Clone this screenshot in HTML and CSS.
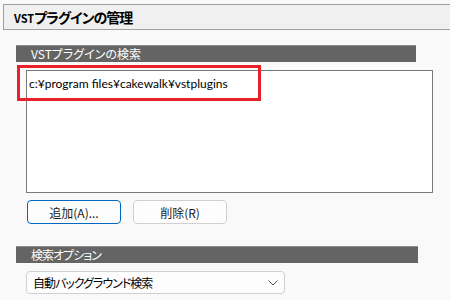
FILE: index.html
```html
<!DOCTYPE html>
<html lang="ja">
<head>
    <meta charset="UTF-8">
    <title>VSTプラグインの管理</title>
    <link rel="stylesheet" href="styles.css">
</head>
<body>
<div class="titlebar"><span class="small">VST</span>プラグインの管理</div>

<div class="panel">
    <div class="section-head">VSTプラグインの検索</div>
    <div class="listbox">
        <div class="path">c:¥program files¥cakewalk¥vstplugins</div>
        <div class="highlight"></div>
    </div>
    <div class="buttons">
        <button class="btn default">追加(A)...</button>
        <button class="btn">削除(R)</button>
    </div>

    <div class="section-head second">検索オプション</div>
    <div class="select">
        <span>自動バックグラウンド検索</span>
        <svg class="chevron" width="10" height="6" viewBox="0 0 10 6">
            <path d="M0.5 0.5 L5 5 L9.5 0.5" fill="none" stroke="#555" stroke-width="1"/>
        </svg>
    </div>
</div>
</body>
</html>
```

FILE: styles.css
```css
body {
    margin: 0;
    background: #f9f9f9;
    font-family: "Noto Sans", "Noto Sans CJK JP", sans-serif;
    font-size: 12px;
    color: #1a1a1a;
    overflow: hidden;
}
.titlebar {
    margin: 4px 0 0 3px;
    height: 24px;
    line-height: 24px;
    padding-left: 10px;
    background: #f0f0f0;
    border-top: 1px solid #a0a0a0;
    border-bottom: 1px solid #a0a0a0;
    border-left: 1px solid #a0a0a0;
    font-family: "Noto Sans CJK JP", sans-serif;
    font-feature-settings: "palt";
    font-weight: bold;
    font-size: 14px;
    letter-spacing: -1px;
    color: #000;
}
.titlebar .small {
    font-size: 11px;
    letter-spacing: 0;
}
.panel {
    padding-left: 16px;
}
.section-head {
    margin-top: 15px;
    width: 385px;
    height: 16px;
    line-height: 15px;
    padding-left: 15px;
    background: #646464;
    border-top: 1px solid #8c8c8c;
    color: #fff;
    font-family: "Noto Sans CJK JP", sans-serif;
    font-feature-settings: "palt";
    font-size: 12px;
}
.section-head.second {
    margin-top: 22px;
    width: 387px;
    letter-spacing: -1px;
}
.listbox {
    position: relative;
    margin: 8px 0 0 10px;
    width: 405px;
    height: 121px;
    background: #fff;
    border: 1px solid #7a7a7a;
}
.path {
    padding: 5px 0 0 2px;
    font-family: Lato, "Noto Sans", sans-serif;
    font-size: 12px;
    color: #000;
}
.highlight {
    position: absolute;
    left: -10px;
    top: -6px;
    width: 238px;
    height: 30px;
    border: 3px solid #e8202a;
}
.buttons {
    display: flex;
    gap: 12px;
    margin: 7px 0 0 11px;
}
.btn {
    width: 94px;
    height: 24px;
    padding: 0;
    background: #fdfdfd;
    border: 1px solid #d0d0d0;
    border-radius: 4px;
    font-family: "Noto Sans CJK JP", sans-serif;
    font-size: 12px;
    color: #1a1a1a;
}
.btn.default {
    border-color: #0067c0;
}
.select {
    display: flex;
    align-items: center;
    justify-content: space-between;
    box-sizing: border-box;
    margin: 8px 0 0 10px;
    width: 259px;
    height: 23px;
    padding: 0 6px 0 6px;
    background: #fdfdfd;
    border: 1px solid #d0d0d0;
    border-radius: 4px;
    font-family: "Noto Sans CJK JP", sans-serif;
    font-feature-settings: "palt";
    font-size: 12px;
    letter-spacing: -1px;
    color: #000;
}
```
